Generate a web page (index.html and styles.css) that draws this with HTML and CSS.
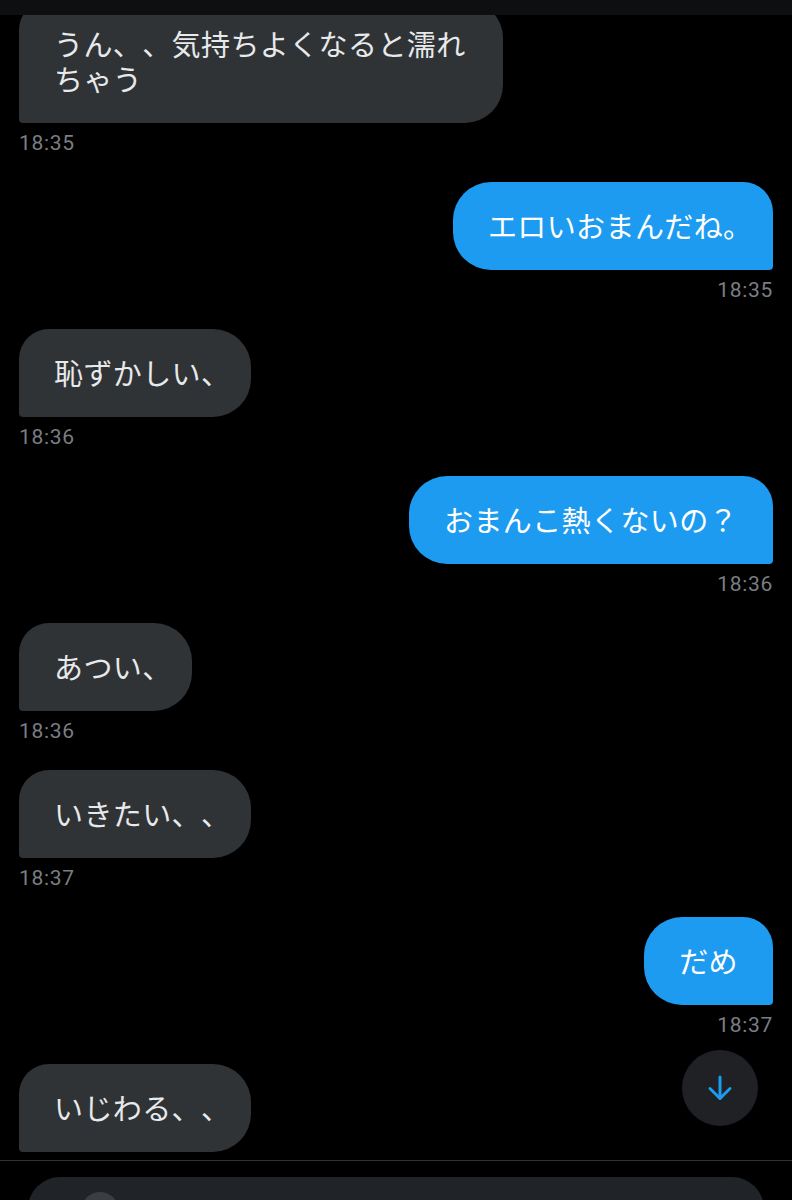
FILE: index.html
```html
<!DOCTYPE html>
<html lang="ja">
<head>
<meta charset="utf-8">
<title>DM</title>
<link rel="stylesheet" href="styles.css">
</head>
<body>
<div class="page">
  <div class="topbar"></div>
  <main class="chat">
    <div class="msg recv">
      <div class="bubble">うん、、気持ちよくなると濡れちゃう</div>
      <div class="time">18:35</div>
    </div>
    <div class="msg sent">
      <div class="bubble">エロいおまんだね<span class="hw">。</span></div>
      <div class="time">18:35</div>
    </div>
    <div class="msg recv">
      <div class="bubble">恥ずかしい<span class="hw">、</span></div>
      <div class="time">18:36</div>
    </div>
    <div class="msg sent">
      <div class="bubble">おまんこ熱くないの？</div>
      <div class="time">18:36</div>
    </div>
    <div class="msg recv">
      <div class="bubble">あつい<span class="hw">、</span></div>
      <div class="time">18:36</div>
    </div>
    <div class="msg recv">
      <div class="bubble">いきたい、<span class="hw">、</span></div>
      <div class="time">18:37</div>
    </div>
    <div class="msg sent">
      <div class="bubble">だめ</div>
      <div class="time">18:37</div>
    </div>
    <div class="msg recv">
      <div class="bubble">いじわる、<span class="hw">、</span></div>
    </div>
  </main>
  <footer class="composer-bar">
    <div class="composer">
      <span class="composer-icon"></span>
    </div>
  </footer>
  <button class="scroll-down" aria-label="一番下へ">
    <svg width="26" height="28" viewBox="0 0 26 28" fill="none" stroke="#1d9bf0" stroke-width="3" stroke-linecap="round" stroke-linejoin="round">
      <path d="M13 3 V24"/>
      <path d="M3 14.5 L13 24.5 L23 14.5"/>
    </svg>
  </button>
</div>
</body>
</html>
```

FILE: styles.css
```css
html, body {
  margin: 0;
  padding: 0;
  background: #000;
}

.page {
  position: relative;
  width: 792px;
  height: 1200px;
  overflow: hidden;
  display: flex;
  flex-direction: column;
  background: #000;
  font-family: "Noto Sans CJK JP", "Noto Sans", sans-serif;
}

.topbar {
  position: absolute;
  top: 0;
  left: 0;
  right: 0;
  height: 15px;
  background: #0e0f11;
  z-index: 2;
}

.chat {
  height: 1160px;
  flex-shrink: 0;
  overflow: hidden;
  padding: 0 19px;
  box-sizing: border-box;
  display: flex;
  flex-direction: column;
}

.msg {
  display: flex;
  flex-direction: column;
  align-items: flex-start;
}

.msg + .msg {
  margin-top: 27px;
}

.msg.sent {
  align-items: flex-end;
}

.bubble {
  box-sizing: border-box;
  max-width: 484px;
  padding: 26px 35px 27px;
  font-size: 29px;
  line-height: 35px;
  letter-spacing: 0.4px;
  color: #e7e9ea;
  background: #2f3336;
  border-radius: 30px 38px 38px 4px;
  text-spacing-trim: space-all;
}

.msg.sent .bubble {
  color: #fff;
  background: #1d9bf0;
  border-radius: 38px 30px 4px 38px;
}

.hw {
  font-feature-settings: "halt";
}

.time {
  margin-top: 8px;
  font-family: Roboto, "Liberation Sans", sans-serif;
  font-size: 21px;
  line-height: 24px;
  letter-spacing: 0.7px;
  color: #7a7e83;
}

.composer-bar {
  flex: 1;
  border-top: 1px solid #2f3336;
  padding: 16px 28px 0;
  overflow: hidden;
}

.composer {
  height: 64px;
  border-radius: 40px;
  background: #202327;
  padding: 15px 0 0 53px;
  box-sizing: border-box;
}

.composer-icon {
  display: block;
  width: 38px;
  height: 38px;
  border-radius: 50%;
  background: #3a3d42;
}

.scroll-down {
  position: absolute;
  left: 682px;
  top: 1050px;
  width: 76px;
  height: 76px;
  border-radius: 50%;
  border: none;
  padding: 0;
  background: #1f2125;
  display: flex;
  align-items: center;
  justify-content: center;
  z-index: 3;
}
```
